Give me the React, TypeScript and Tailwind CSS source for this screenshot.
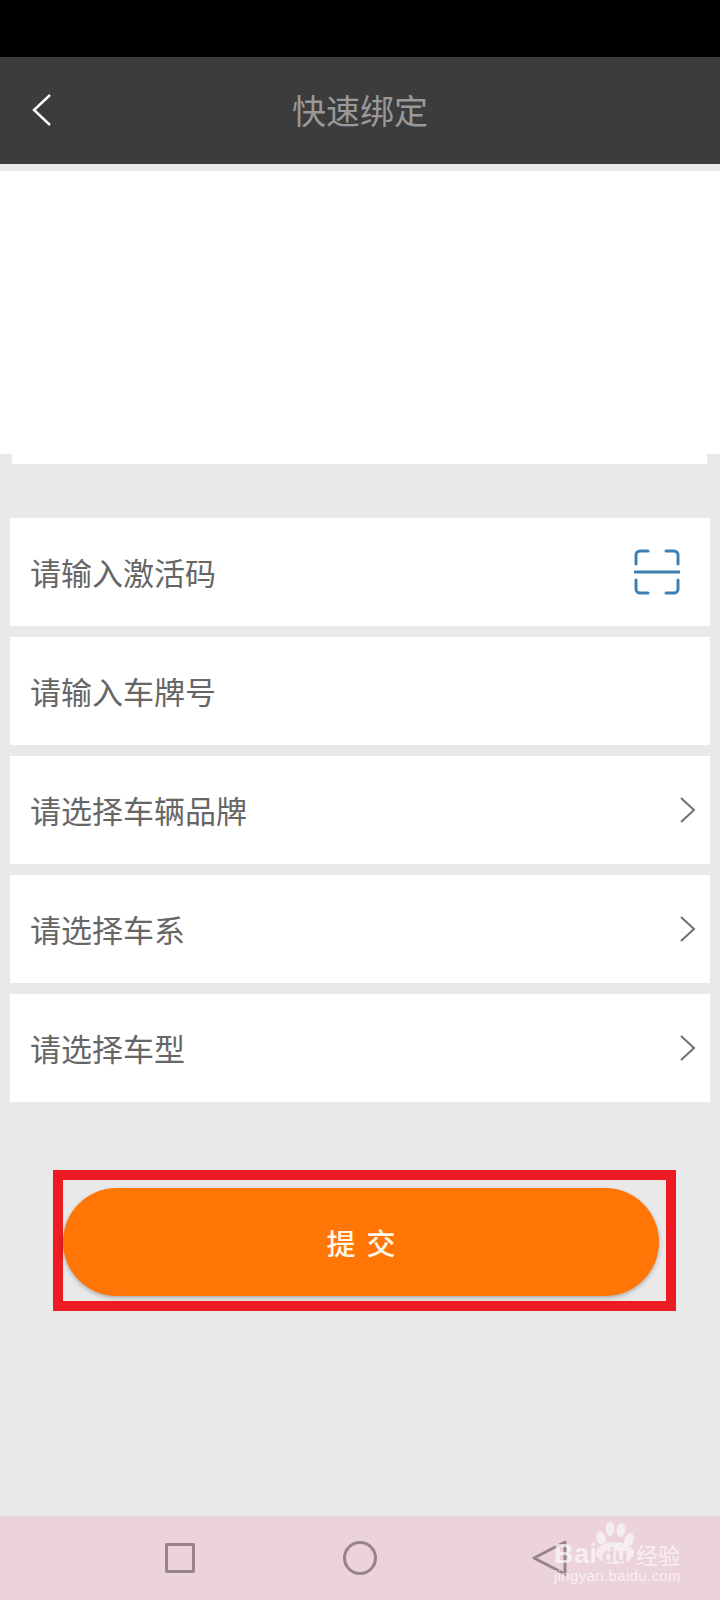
const rows = [
  { label: "请输入激活码", icon: "scan" },
  { label: "请输入车牌号" },
  { label: "请选择车辆品牌", icon: "chevron" },
  { label: "请选择车系", icon: "chevron" },
  { label: "请选择车型", icon: "chevron" },
];

function ScanIcon() {
  return (
    <svg width="46" height="46" viewBox="0 0 46 46" fill="none" stroke="#3f80b2" strokeWidth="3" strokeLinecap="round">
      <path d="M14 2H6a4 4 0 0 0-4 4v9" />
      <path d="M32 2h8a4 4 0 0 1 4 4v9" />
      <path d="M14 44H6a4 4 0 0 1-4-4v-9" />
      <path d="M32 44h8a4 4 0 0 0 4-4v-9" />
      <path d="M1 23h44" />
    </svg>
  );
}

function Chevron() {
  return (
    <svg width="17" height="26" viewBox="0 0 17 26" fill="none" stroke="#707070" strokeWidth="2">
      <path d="M2 1l13 12L2 25" />
    </svg>
  );
}

function Watermark() {
  return (
    <div className="absolute right-[40px] bottom-[10px] h-[68px] w-[126px] text-white/65 font-['Liberation_Sans',sans-serif]">
      <svg className="absolute left-[42px] top-0" width="38" height="42" viewBox="0 0 38 42" fill="#f6edf0">
        <ellipse cx="5" cy="16" rx="4.5" ry="7" transform="rotate(-15 5 16)" />
        <ellipse cx="14" cy="7" rx="4.5" ry="7" />
        <ellipse cx="25" cy="8" rx="4.5" ry="7" transform="rotate(8 25 8)" />
        <ellipse cx="33" cy="18" rx="4.5" ry="7" transform="rotate(18 33 18)" />
        <ellipse cx="19" cy="31" rx="19" ry="11" />
      </svg>
      <span className="absolute left-0 top-[17px] text-[27px] leading-[30px] font-bold tracking-[0.5px]">Bai</span>
      <span className="absolute left-[48px] top-[21px] text-[21px] leading-[24px] font-bold text-[#ecd2d9]">du</span>
      <span className="absolute left-[82px] top-[18px] text-[22px] leading-[28px] font-['Noto_Sans_CJK_SC',sans-serif]">经验</span>
      <span className="absolute left-0 top-[45px] text-[15px] leading-[18px] tracking-[0.35px] whitespace-nowrap">jingyan.baidu.com</span>
    </div>
  );
}

export default function App() {
  return (
    <div className="relative flex min-h-[1600px] w-[720px] flex-col overflow-hidden bg-[#e9e9e9] font-['Noto_Sans_CJK_SC','Noto_Sans',sans-serif]">
      <div className="h-[57px] bg-black" />
      <header className="relative flex h-[107px] items-center justify-center bg-[#3c3c3c]">
        <svg className="absolute left-[31px] top-[36px]" width="22" height="34" viewBox="0 0 22 34" fill="none" stroke="#ffffff" strokeWidth="2.4">
          <path d="M19 2L3 17l16 15" />
        </svg>
        <h1 className="pb-[2px] text-[34px] font-normal leading-none text-[#999999]">快速绑定</h1>
      </header>

      <div className="mt-[7px] h-[283px] bg-white" />
      <div className="mx-3 h-[10px] w-[695px] bg-white" />

      <div className="mt-[54px] flex flex-col gap-[11px] px-[10px]">
        {rows.map((row) => (
          <div key={row.label} className="flex h-[108px] items-center justify-between bg-white pl-[20px]">
            <span className="pb-[2px] text-[31px] leading-none text-[#666666]">{row.label}</span>
            {row.icon === "scan" && (
              <span className="mr-[30px] flex">
                <ScanIcon />
              </span>
            )}
            {row.icon === "chevron" && (
              <span className="mr-[14px] flex">
                <Chevron />
              </span>
            )}
          </div>
        ))}
      </div>

      <div className="mt-[68px] ml-[53px] h-[141px] w-[623px] border-[10px] border-[#ed1c24] pr-[7px] pt-2">
        <button className="flex h-[108px] w-full items-center justify-center rounded-[54px] bg-[#ff7506] text-[29px] font-medium tracking-[11px] text-[#fff8ea] shadow-[0_2px_4px_rgba(0,0,0,0.25)]">
          <span className="pl-[11px] leading-none">提交</span>
        </button>
      </div>

      <nav className="relative mt-auto flex h-[84px] items-center bg-[#ecd2d9] pl-[165px]">
        <div className="h-[30px] w-[30px] rounded-[2px] border-[3px] border-[#978488]" />
        <div className="ml-[148px] h-[34px] w-[34px] rounded-full border-[3px] border-[#978488]" />
        <svg className="ml-[155px]" width="35" height="36" viewBox="0 0 35 36" fill="none" stroke="#978488" strokeWidth="3" strokeLinejoin="round">
          <path d="M33 2L2 18l31 16z" />
        </svg>
        <Watermark />
      </nav>
    </div>
  );
}
